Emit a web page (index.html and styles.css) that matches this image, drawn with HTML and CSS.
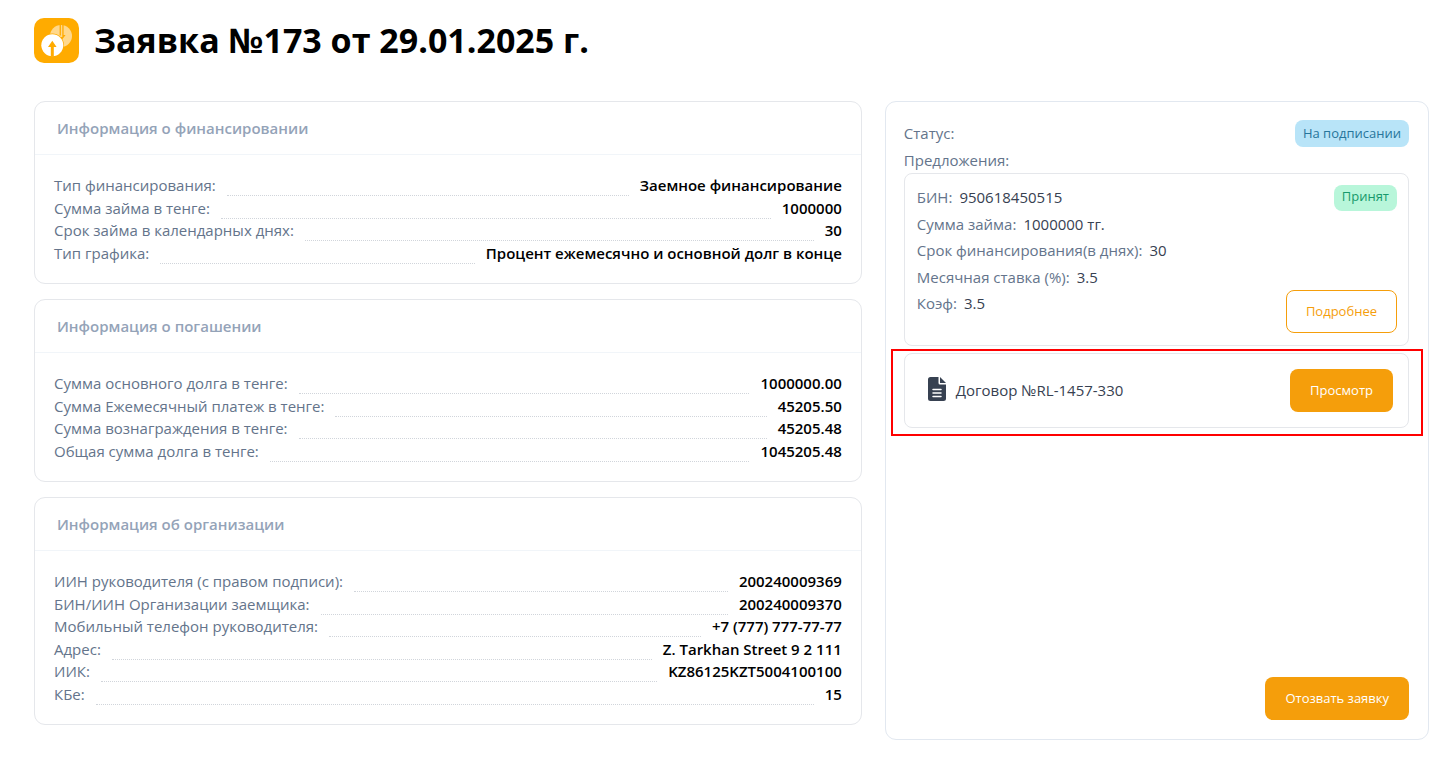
FILE: index.html
```html
<!DOCTYPE html>
<html lang="ru">
<head>
  <meta charset="UTF-8">
  <meta name="viewport" content="width=device-width, initial-scale=1.0">
  <title>Заявка №173</title>
  <link rel="stylesheet" href="styles.css">
</head>
<body>
  <header class="page-header">
    <svg class="logo" viewBox="0 0 45 45" aria-hidden="true">
      <rect width="45" height="45" rx="10" fill="#ffab00"/>
      <circle cx="27" cy="18" r="11" fill="#ffd88c"/>
      <path d="M25.600 6.500h1.300v11h-1.300zM28.300 6.500h1.300V17h2l-3.900 5-1.500-3h2.100z" fill="#ffab00"/>
      <circle cx="18.300" cy="27.300" r="11.700" fill="#ffab00"/>
      <circle cx="18.300" cy="27.300" r="11" fill="#fff"/>
      <path d="M16.800 38.800V29h-2.800l4.300-6.300 4.300 6.300h-2.800v9.800z" fill="#ffab00"/>
    </svg>
    <h1>Заявка №173 от 29.01.2025 г.</h1>
  </header>

  <main class="layout">
    <div class="info">
      <section class="card">
        <h2>Информация о финансировании</h2>
        <dl class="rows">
          <div class="row"><dt>Тип финансирования:</dt><dd>Заемное финансирование</dd></div>
          <div class="row"><dt>Сумма займа в тенге:</dt><dd>1000000</dd></div>
          <div class="row"><dt>Срок займа в календарных днях:</dt><dd>30</dd></div>
          <div class="row"><dt>Тип графика:</dt><dd>Процент ежемесячно и основной долг в конце</dd></div>
        </dl>
      </section>

      <section class="card">
        <h2>Информация о погашении</h2>
        <dl class="rows">
          <div class="row"><dt>Сумма основного долга в тенге:</dt><dd>1000000.00</dd></div>
          <div class="row"><dt>Сумма Ежемесячный платеж в тенге:</dt><dd>45205.50</dd></div>
          <div class="row"><dt>Сумма вознаграждения в тенге:</dt><dd>45205.48</dd></div>
          <div class="row"><dt>Общая сумма долга в тенге:</dt><dd>1045205.48</dd></div>
        </dl>
      </section>

      <section class="card">
        <h2>Информация об организации</h2>
        <dl class="rows">
          <div class="row"><dt>ИИН руководителя (с правом подписи):</dt><dd>200240009369</dd></div>
          <div class="row"><dt>БИН/ИИН Организации заемщика:</dt><dd>200240009370</dd></div>
          <div class="row"><dt>Мобильный телефон руководителя:</dt><dd>+7 (777) 777-77-77</dd></div>
          <div class="row"><dt>Адрес:</dt><dd>Z. Tarkhan Street 9 2 111</dd></div>
          <div class="row"><dt>ИИК:</dt><dd>KZ86125KZT5004100100</dd></div>
          <div class="row"><dt>КБе:</dt><dd>15</dd></div>
        </dl>
      </section>
    </div>

    <aside class="panel">
      <div class="status">
        <span>Статус:</span>
        <span class="badge badge-sign">На подписании</span>
      </div>
      <div class="offers-title">Предложения:</div>

      <section class="offer">
        <dl class="offer-data">
          <div><dt>БИН:</dt><dd>950618450515</dd></div>
          <div><dt>Сумма займа:</dt><dd>1000000 тг.</dd></div>
          <div><dt>Срок финансирования(в днях):</dt><dd>30</dd></div>
          <div><dt>Месячная ставка (%):</dt><dd>3.5</dd></div>
          <div><dt>Коэф:</dt><dd>3.5</dd></div>
        </dl>
        <div class="offer-side">
          <span class="badge badge-accepted">Принят</span>
          <button type="button" class="btn btn-outline">Подробнее</button>
        </div>
      </section>

      <section class="contract">
        <svg class="doc-icon" viewBox="0 0 18 24" aria-hidden="true">
          <path d="M2.500 0H10.500V6a1.500 1.500 0 0 0 1.500 1.500H18V21.500A2.500 2.500 0 0 1 15.500 24H2.500A2.500 2.500 0 0 1 0 21.500V2.500A2.500 2.500 0 0 1 2.500 0z" fill="#374151"/>
          <path d="M12 0l6 6h-6z" fill="#374151"/>
          <path d="M5 12.500h8M5 16h8M5 19.500h8" stroke="#fff" stroke-width="1.500" stroke-linecap="round"/>
        </svg>
        <span>Договор №RL-1457-330</span>
        <button type="button" class="btn">Просмотр</button>
      </section>

      <button type="button" class="btn btn-withdraw">Отозвать заявку</button>
    </aside>
  </main>
</body>
</html>
```

FILE: styles.css
```css
* {
  box-sizing: border-box;
}
body {
  margin: 0;
  padding: 18px 24px 24px 34px;
  background-color: #fff;
  color: #64748b;
  font-family: "Open Sans", "Noto Sans", sans-serif;
  font-size: 15px;
  line-height: 1.5;
}
h1, h2, dl, dd {
  margin: 0;
}
.page-header {
  display: flex;
  align-items: center;
  gap: 15px;
  margin-bottom: 38px;
}
.logo {
  width: 45px;
  height: 45px;
}
h1 {
  color: #000;
  font-size: 34px;
  font-weight: 700;
  line-height: 45px;
}
.layout {
  display: grid;
  grid-template-columns: repeat(5, 1fr);
  gap: 23px;
}
.info {
  grid-column: span 3;
  padding-bottom: 15px;
  display: flex;
  flex-direction: column;
  gap: 15px;
}
.card {
  border: 1px solid #e5e7eb;
  border-radius: 11px;
}
h2 {
  padding: 15px 22px;
  border-bottom: 1px solid #f1f5f9;
  color: #94a3b8;
  font-size: 15px;
  font-weight: 600;
  line-height: 22px;
}
.rows {
  padding: 19px;
}
.row {
  display: flex;
}
/* dotted line between label and value */
.row dt {
  display: flex;
  flex: 1;
}
.row dt::after {
  content: "";
  flex: 1;
  height: 21px;
  margin: 0 11px;
  border-bottom: 1px dotted #d1d5db;
}
.row dd {
  color: #000;
  font-weight: 600;
}

.panel {
  grid-column: span 2;
  display: flex;
  flex-direction: column;
  padding: 18px 19px 19px 18px;
  border: 1px solid #e2e8f0;
  border-radius: 11px;
}
.status {
  display: flex;
  justify-content: space-between;
  align-items: center;
}
.badge {
  padding: 3px 8px;
  border-radius: 8px;
  font-size: 13px;
  line-height: 21px;
}
.badge-sign {
  background-color: #b8e4f8;
  color: #27759b;
}
.badge-accepted {
  padding: 1px 8px 4px;
  background-color: #b8f6da;
  color: #179a6b;
}
.offers-title {
  margin: 2px 0;
  line-height: 22px;
}
.offer {
  display: flex;
  justify-content: space-between;
  padding: 11px 11px 12px 12px;
  border: 1px solid #e5e7eb;
  border-radius: 8px;
}
.offer-data {
  display: flex;
  flex-direction: column;
  gap: 4px;
  padding-top: 1px;
}
.offer-data div {
  display: flex;
  gap: 7px;
}
.offer-data dd {
  color: #374151;
}
.offer-side {
  display: flex;
  flex-direction: column;
  justify-content: space-between;
  align-items: flex-end;
  min-height: 148px;
}
.btn {
  height: 43px;
  padding: 0 20px 1px;
  border: none;
  border-radius: 8px;
  background-color: #f59e0b;
  color: #fff;
  font-family: inherit;
  font-size: 13px;
  cursor: pointer;
}
.btn:hover {
  background-color: #d97706;
}
.btn-outline {
  padding: 0 19px 1px;
  border: 1px solid #f59e0b;
  background-color: #fff;
  color: #f59e0b;
}
.btn-outline:hover {
  background-color: #fffbeb;
}
.contract {
  position: relative;
  display: flex;
  align-items: center;
  gap: 10px;
  margin-top: 7px;
  padding: 15px 15px 15px 23px;
  border: 1px solid #e5e7eb;
  border-radius: 8px;
  color: #374151;
}
.contract .btn {
  margin-left: auto;
}
/* red highlight frame around the contract */
.contract::after {
  content: "";
  position: absolute;
  inset: -5px -15px -9px -14px;
  border: 2px solid #ff0000;
  pointer-events: none;
}
.doc-icon {
  width: 18px;
  height: 24px;
  margin-bottom: 3px;
}
.btn-withdraw {
  align-self: flex-end;
  margin-top: auto;
}
```
